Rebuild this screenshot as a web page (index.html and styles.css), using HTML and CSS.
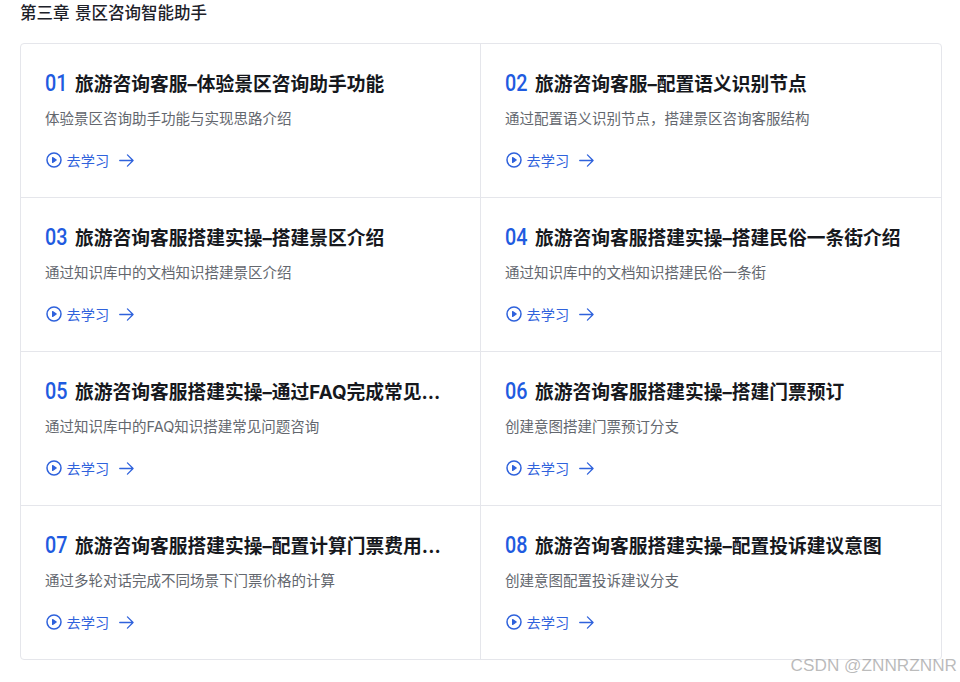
FILE: index.html
```html
<!DOCTYPE html>
<html lang="zh-CN">
<head>
<meta charset="utf-8">
<title>第三章 景区咨询智能助手</title>
<link rel="stylesheet" href="styles.css">
</head>
<body>
<svg class="defs" width="0" height="0" aria-hidden="true">
  <symbol id="play" viewBox="0 0 16 16">
    <circle cx="8" cy="8" r="7" fill="none" stroke="currentColor" stroke-width="1.5"/>
    <path d="M6.6 5.6 10.2 8 6.6 10.4Z" fill="currentColor" stroke="currentColor" stroke-width="1.2" stroke-linejoin="round"/>
  </symbol>
  <symbol id="arrow" viewBox="0 0 16 16">
    <path d="M.8 8H15M9 2l6 6-6 6" fill="none" stroke="currentColor" stroke-width="1.4" stroke-linecap="round" stroke-linejoin="round"/>
  </symbol>
</svg>
<h1 class="chapter">第三章 景区咨询智能助手</h1>
<div class="grid">
  <article class="card">
    <h2 class="title"><span class="num">01</span><span class="name">旅游咨询客服–体验景区咨询助手功能</span></h2>
    <p class="desc">体验景区咨询助手功能与实现思路介绍</p>
    <a class="go"><svg class="ic"><use href="#play"/></svg><span>去学习</span><svg class="ar"><use href="#arrow"/></svg></a>
  </article>
  <article class="card">
    <h2 class="title"><span class="num">02</span><span class="name">旅游咨询客服–配置语义识别节点</span></h2>
    <p class="desc">通过配置语义识别节点，搭建景区咨询客服结构</p>
    <a class="go"><svg class="ic"><use href="#play"/></svg><span>去学习</span><svg class="ar"><use href="#arrow"/></svg></a>
  </article>
  <article class="card">
    <h2 class="title"><span class="num">03</span><span class="name">旅游咨询客服搭建实操–搭建景区介绍</span></h2>
    <p class="desc">通过知识库中的文档知识搭建景区介绍</p>
    <a class="go"><svg class="ic"><use href="#play"/></svg><span>去学习</span><svg class="ar"><use href="#arrow"/></svg></a>
  </article>
  <article class="card">
    <h2 class="title"><span class="num">04</span><span class="name">旅游咨询客服搭建实操–搭建民俗一条街介绍</span></h2>
    <p class="desc">通过知识库中的文档知识搭建民俗一条街</p>
    <a class="go"><svg class="ic"><use href="#play"/></svg><span>去学习</span><svg class="ar"><use href="#arrow"/></svg></a>
  </article>
  <article class="card">
    <h2 class="title"><span class="num">05</span><span class="name">旅游咨询客服搭建实操–通过FAQ完成常见...</span></h2>
    <p class="desc">通过知识库中的FAQ知识搭建常见问题咨询</p>
    <a class="go"><svg class="ic"><use href="#play"/></svg><span>去学习</span><svg class="ar"><use href="#arrow"/></svg></a>
  </article>
  <article class="card">
    <h2 class="title"><span class="num">06</span><span class="name">旅游咨询客服搭建实操–搭建门票预订</span></h2>
    <p class="desc">创建意图搭建门票预订分支</p>
    <a class="go"><svg class="ic"><use href="#play"/></svg><span>去学习</span><svg class="ar"><use href="#arrow"/></svg></a>
  </article>
  <article class="card">
    <h2 class="title"><span class="num">07</span><span class="name">旅游咨询客服搭建实操–配置计算门票费用...</span></h2>
    <p class="desc">通过多轮对话完成不同场景下门票价格的计算</p>
    <a class="go"><svg class="ic"><use href="#play"/></svg><span>去学习</span><svg class="ar"><use href="#arrow"/></svg></a>
  </article>
  <article class="card">
    <h2 class="title"><span class="num">08</span><span class="name">旅游咨询客服搭建实操–配置投诉建议意图</span></h2>
    <p class="desc">创建意图配置投诉建议分支</p>
    <a class="go"><svg class="ic"><use href="#play"/></svg><span>去学习</span><svg class="ar"><use href="#arrow"/></svg></a>
  </article>
</div>
<div class="watermark">CSDN @ZNNRZNNR</div>
</body>
</html>
```
FILE: styles.css
```css
* { box-sizing: border-box; }
html, body { margin: 0; padding: 0; }
body {
  width: 960px;
  height: 682px;
  overflow: hidden;
  position: relative;
  background: #fff;
  padding: 0 18px 0 20px;
  font-family: Inter, "Noto Sans CJK SC", sans-serif;
}
.defs { position: absolute; }
.chapter {
  margin: 0;
  height: 43px;
  padding-top: 1px;
  font-size: 16.5px;
  line-height: 24px;
  font-weight: 500;
  word-spacing: 1px;
  color: #1d2129;
}
.grid {
  display: grid;
  grid-template-columns: 460px 1fr;
  grid-auto-rows: 154px;
  border: 1px solid #e5e6eb;
  border-radius: 4px;
  height: 617px;
}
.card {
  padding: 23px 24px 0;
  min-width: 0;
  border-bottom: 1px solid #e5e6eb;
}
.card:nth-child(odd) { border-right: 1px solid #e5e6eb; }
.card:nth-last-child(-n+2) { border-bottom: 0; }
.title {
  display: flex;
  align-items: center;
  margin: 0;
  height: 30px;
  font-size: 18.75px;
  font-weight: 700;
  color: #16181d;
}
.num {
  flex: none;
  width: 30px;
  padding-top: 3px;
  font-family: Roboto, sans-serif;
  font-size: 23px;
  font-weight: 500;
  color: #1f5be0;
  transform: scaleX(0.86);
  transform-origin: left center;
}
.name {
  flex: 1;
  min-width: 0;
  white-space: nowrap;
}
.desc {
  margin: 10px 0 0;
  height: 24px;
  font-size: 14.5px;
  line-height: 24px;
  color: #63676e;
}
.go {
  display: flex;
  align-items: center;
  margin-top: 17px;
  height: 24px;
  font-size: 14.2px;
  color: #2f62dc;
}
.ic { width: 16px; height: 16px; margin: 0 5px 0 0.5px; }
.ar { width: 15px; height: 15px; margin-left: 10px; }
.watermark {
  position: absolute;
  right: 3px;
  top: 654px;
  font-family: "Liberation Sans", sans-serif;
  font-size: 17.2px;
  line-height: 22px;
  color: rgba(130, 130, 130, 0.55);
}
```
